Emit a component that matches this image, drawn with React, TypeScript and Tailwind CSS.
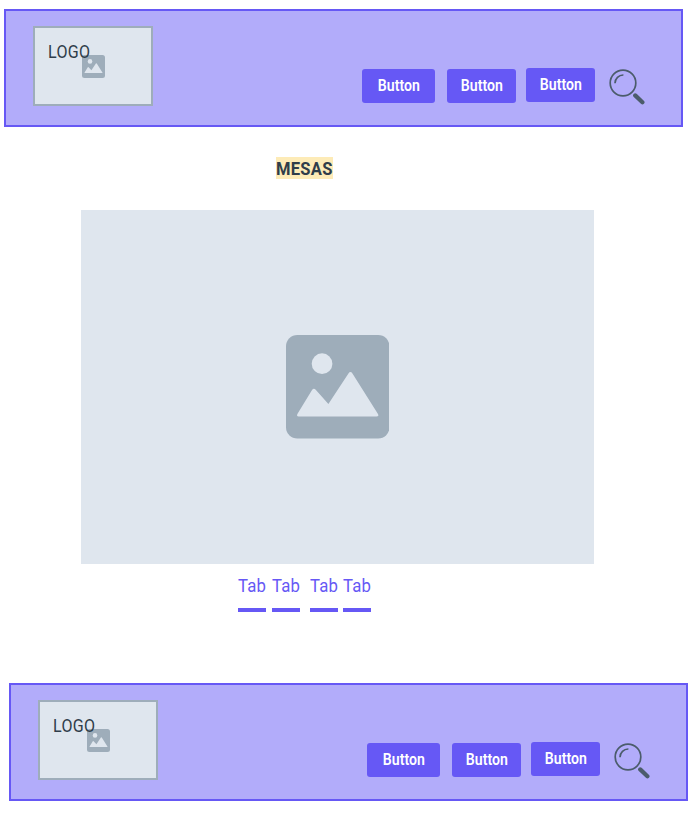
import React from "react";

function PictureIcon({ className }: { className: string }) {
  return (
    <svg viewBox="0 0 310 310" className={className} aria-hidden="true">
      <rect width="310" height="310" rx="34" fill="#9eadba" />
      <circle cx="108" cy="86" r="31" fill="#dfe6ee" />
      <path
        d="M35 235 L78 165 Q83 157 89 164 L127 207 L187 115 Q193 107 199 115 L275 236 Q280 244 271 244 L38 244 Q30 244 35 235 Z"
        fill="#dfe6ee"
      />
    </svg>
  );
}

function MagnifierIcon() {
  return (
    <svg viewBox="0 0 36 36" className="mt-[58px] ml-[14px] h-9 w-9 shrink-0" fill="none" stroke="#4b5c6b" strokeLinecap="round" aria-hidden="true">
      <circle cx="14" cy="14" r="12.8" strokeWidth="1.7" />
      <path d="M6 14.2 A8.2 8.2 0 0 1 14.4 6" strokeWidth="1.7" strokeLinecap="butt" />
      <path d="M26.2 26.4 L33.4 33.2" strokeWidth="4.2" />
    </svg>
  );
}

function NavButton({ className }: { className: string }) {
  return (
    <button
      className={`flex h-[34px] shrink-0 items-center justify-center rounded-[3px] bg-[#6658f5] font-['Roboto','Liberation_Sans',sans-serif] text-[16px] leading-none font-semibold text-white ${className}`}
    >
      <span className="inline-block scale-x-[0.88]">Button</span>
    </button>
  );
}

function Banner({ className }: { className: string }) {
  return (
    <div className={`flex h-[118px] w-[679px] items-start border-2 border-[#6658f5] bg-[#b2acfa] ${className}`}>
      <div className="relative mt-[15px] ml-[27px] flex h-20 w-[120px] shrink-0 items-center justify-center border-2 border-[#9eadba] bg-[#dfe6ee]">
        <PictureIcon className="h-[23px] w-[23px]" />
        <span className="absolute top-[13px] left-[12.5px] origin-left scale-x-[0.89] text-[18px] leading-[22px] tracking-[0.4px] text-[#2f3d4a]">LOGO</span>
      </div>
      <NavButton className="mt-[58px] ml-[209px] w-[73px]" />
      <NavButton className="mt-[58px] ml-3 w-[69px]" />
      <NavButton className="mt-[57px] ml-[10px] w-[69px]" />
      <MagnifierIcon />
    </div>
  );
}

function Tab({ className }: { className: string }) {
  return (
    <div className={`h-[37px] w-7 border-b-4 border-[#6658f5] text-[18px] leading-[22px] text-[#6658f5] ${className}`}>
      <span className="inline-block origin-left scale-x-[0.93] tracking-[0.2px]">Tab</span>
    </div>
  );
}

export default function App() {
  return (
    <div className="flex h-[816px] w-[697px] flex-col items-start overflow-hidden bg-white pt-[9px] font-['Roboto','Liberation_Sans',sans-serif]">
      <Banner className="ml-1" />
      <h1 className="mt-[30px] ml-[276px] h-[22px] w-[57px] bg-[#fdebb7] text-[18px] leading-[23px] font-bold text-[#2f3d4a]">
        <span className="inline-block origin-left scale-x-[0.92] tracking-[0.3px]">MESAS</span>
      </h1>
      <div className="mt-[31px] ml-[81px] flex h-[354px] w-[513px] items-center justify-center bg-[#dfe6ee]">
        <PictureIcon className="h-[103.5px] w-[103.5px]" />
      </div>
      <div className="mt-[11px] ml-[238px] flex">
        <Tab className="" />
        <Tab className="ml-[6px]" />
        <Tab className="ml-[10px]" />
        <Tab className="ml-[5px]" />
      </div>
      <Banner className="mt-[71px] ml-[9px]" />
    </div>
  );
}
